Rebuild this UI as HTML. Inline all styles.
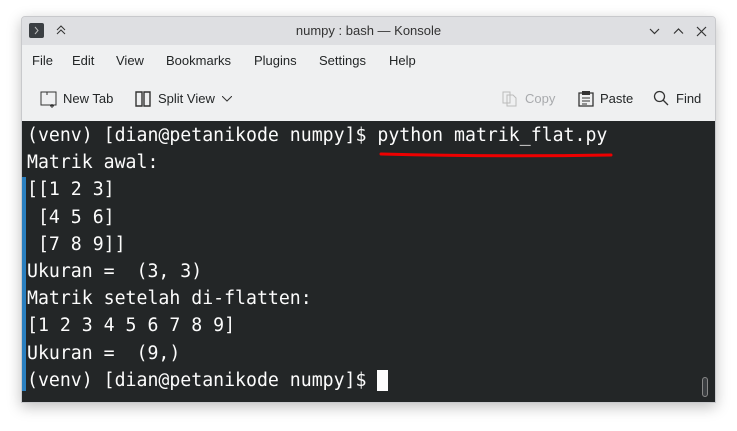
<!DOCTYPE html>
<html><head><style>
*{margin:0;padding:0;box-sizing:border-box}
body{width:737px;height:431px;background:#fff;position:relative;overflow:hidden;font-family:"Liberation Sans",sans-serif}
.win{position:absolute;left:21px;top:16px;width:695px;height:387px;border:1px solid #c8c9cc;border-radius:4px 4px 0 0;box-shadow:0 4px 14px rgba(0,0,0,.25);overflow:hidden;background:#eff0f1}
.title{position:absolute;left:0;top:0;width:100%;height:28px;background:#dedfe2}
.title .t{position:absolute;left:0;width:100%;top:6px;text-align:center;font-size:13px;color:#333}
.menu{position:absolute;top:36px;left:0;font-size:13px;color:#232627}
.menu span{position:absolute;white-space:nowrap}
.tb{position:absolute;top:74px;font-size:13px;color:#232627;white-space:nowrap}
.term{position:absolute;left:0;top:104px;width:695px;height:283px;background:#232627}
.term pre{position:absolute;left:5px;top:1px;font-family:"DejaVu Sans Mono","Liberation Mono",monospace;font-size:18.2px;line-height:27.2px;color:#fcfcfc}
.bar{position:absolute;left:0;top:56px;width:4px;height:214px;background:#2a7fbf}
</style></head><body>
<div class="win">
 <div class="title">
  <div style="position:absolute;left:7px;top:6px;width:15px;height:15px;background:#3b3f43;border-radius:2px"></div>
  <svg style="position:absolute;left:7px;top:6px" width="15" height="15"><path d="M6 4l3 3.5-3 3.5" stroke="#bbb" fill="none"/></svg>
  <svg style="position:absolute;left:32px;top:6px" width="14" height="14"><path d="M3 7l4-4 4 4M3 11l4-4 4 4" stroke="#333" fill="none"/></svg>
  <div class="t">numpy : bash — Konsole</div>
  <svg style="position:absolute;left:627px;top:9px" width="60" height="12"><path d="M1 3l4.5 4.5 4.5-4.5M25 7.5l4.5-4.5 4.5 4.5M48 1l9 9M57 1l-9 9" stroke="#333" fill="none" stroke-width="1.2"/></svg>
 </div>
 <div class="menu">
  <span style="left:10px">File</span><span style="left:50px">Edit</span><span style="left:94px">View</span><span style="left:144px">Bookmarks</span><span style="left:232px">Plugins</span><span style="left:297px">Settings</span><span style="left:367px">Help</span>
 </div>
 <svg style="position:absolute;left:18px;top:73px" width="18" height="18"><path d="M1 2h15v13H1zM1 2h6v3" stroke="#333" fill="none"/><path d="M12 14v4M10 16h4" stroke="#333"/></svg>
 <div class="tb" style="left:41px">New Tab</div>
 <svg style="position:absolute;left:111px;top:104px" width="6" height="4"><path d="M0 0l3 3 3-3" stroke="#333" fill="none"/></svg>
 <svg style="position:absolute;left:113px;top:74px" width="16" height="16"><path d="M1 1h6v14H1zM9 1h6v14H9z" stroke="#333" fill="none" stroke-width="1.4"/></svg>
 <div class="tb" style="left:136px">Split View</div>
 <svg style="position:absolute;left:200px;top:79px" width="10" height="6"><path d="M0 0l5 5 5-5" stroke="#333" fill="none"/></svg>
 <svg style="position:absolute;left:480px;top:74px" width="16" height="16"><path d="M1 1h7v11H1zM5 4h6l3 3v8H5z" stroke="#bbb" fill="none"/></svg>
 <div class="tb" style="left:503px;color:#a8aaad">Copy</div>
 <svg style="position:absolute;left:556px;top:73px" width="16" height="17"><path d="M1 3h14v13H1z" stroke="#333" fill="none" stroke-width="1.3"/><path d="M4 1h8v4H4z" fill="#333"/><path d="M4 8h8M4 11h8M4 14h5" stroke="#333"/></svg>
 <div class="tb" style="left:578px">Paste</div>
 <svg style="position:absolute;left:631px;top:73px" width="16" height="17"><circle cx="6.5" cy="6.5" r="5" stroke="#333" fill="none" stroke-width="1.3"/><path d="M10 10l5 5" stroke="#333" stroke-width="1.3"/></svg>
 <div class="tb" style="left:654px">Find</div>
 <div class="term">
  <div class="bar"></div>
  <pre>(venv) [dian@petanikode numpy]$ python matrik_flat.py
Matrik awal:
[[1 2 3]
 [4 5 6]
 [7 8 9]]
Ukuran =  (3, 3)
Matrik setelah di-flatten:
[1 2 3 4 5 6 7 8 9]
Ukuran =  (9,)
(venv) [dian@petanikode numpy]$ <span style="background:#fcfcfc">&nbsp;</span></pre>
  <svg style="position:absolute;left:357px;top:30px" width="236" height="8"><path d="M2 3Q115 6 232 4" stroke="#e00" stroke-width="3" fill="none" stroke-linecap="round"/></svg>
  <div style="position:absolute;left:680px;top:256px;width:6px;height:20px;border:1px solid #888;border-radius:3px;background:#3a3d40"></div>
 </div>
</div>
</body></html>
